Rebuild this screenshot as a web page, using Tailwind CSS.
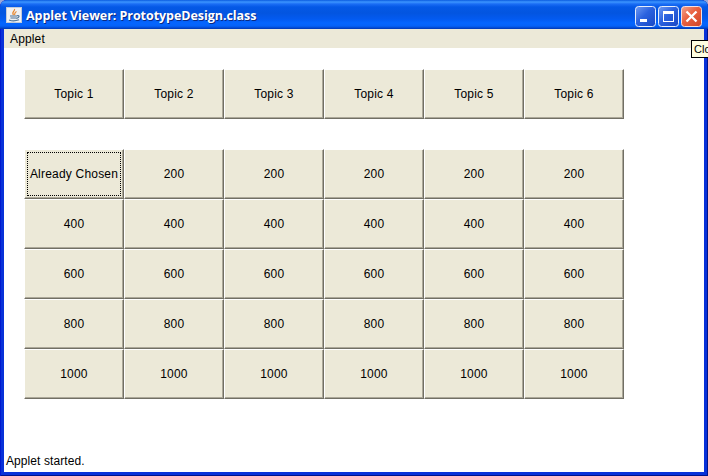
<!DOCTYPE html>
<html lang="en">
<head>
<meta charset="utf-8">
<title>Applet Viewer</title>
<script src="https://cdn.jsdelivr.net/npm/@tailwindcss/browser@4"></script>
</head>
<body class="w-[708px] h-[476px] overflow-hidden bg-[#9aa8d8] font-['Liberation_Sans',Arial,sans-serif] text-[12px] text-black">
<div class="relative flex flex-col w-[708px] h-[476px] rounded-t-[7px] overflow-hidden bg-[#0831d9] shadow-[inset_1px_0_#0019cf,inset_-1px_0_#00138c,inset_0_-1px_#00138c]">
  <header class="flex items-center h-[29px] shrink-0 pl-[6px] pr-[6px] bg-[linear-gradient(to_bottom,#0a5be0_0px,#3c95ff_2px,#1a6df5_4px,#0458e6_7px,#0355e0_13px,#035af0_19px,#0566ff_23px,#0562f8_26px,#0347ce_28px,#0037b0_29px)]">
    <svg class="w-4 h-4 mt-px shrink-0" viewBox="0 0 16 16" fill="none">
      <rect x="0.5" y="0.5" width="15" height="15" fill="#f0f1f3" stroke="#c3cbd8"/>
      <path d="M8.500 2C9.500 4 5 5 7.500 8M10.500 4.500C8 5.800 9.200 6.500 8.500 8" stroke="#e8862c" stroke-width="1.200"/>
      <path d="M4 9h7M4.500 11h6M11 8.800c3-1 2.500 2-.5 2.500M3 13c3 1.200 7 1 10-.2" stroke="#4f7396" stroke-width="1.200"/>
    </svg>
    <h1 class="ml-[4px] mt-[3px] whitespace-nowrap font-['Open_Sans',sans-serif] text-[12.5px] leading-[16px] font-bold text-white tracking-[-0.05px] [text-shadow:1px_1px_#0b2a82]">Applet Viewer: PrototypeDesign.class</h1>
    <div class="ml-auto flex gap-[2px] mt-[3px]">
      <svg class="w-[21px] h-[21px]" viewBox="0 0 21 21"><defs><linearGradient id="b" x2="1" y2="1"><stop stop-color="#6f9bf3"/><stop offset=".45" stop-color="#2b62df"/><stop offset="1" stop-color="#1947c4"/></linearGradient></defs><rect x=".5" y=".5" width="20" height="20" rx="3" fill="url(#b)" stroke="#e5edfc"/><path d="M5 13h7v3H5z" fill="#fff"/></svg>
      <svg class="w-[21px] h-[21px]" viewBox="0 0 21 21"><rect x=".5" y=".5" width="20" height="20" rx="3" fill="url(#b)" stroke="#e5edfc"/><path d="M5 5h11v11H5zM6 8v7h9V8z" fill="#fff" fill-rule="evenodd"/></svg>
      <svg class="w-[21px] h-[21px]" viewBox="0 0 21 21"><defs><linearGradient id="r" x2="1" y2="1"><stop stop-color="#f2a48f"/><stop offset=".45" stop-color="#e9603f"/><stop offset="1" stop-color="#d04526"/></linearGradient></defs><rect x=".5" y=".5" width="20" height="20" rx="3" fill="url(#r)" stroke="#f5dfe0"/><path d="M5.500 5.500l10 10M15.500 5.500l-10 10" stroke="#fff" stroke-width="2.300"/></svg>
    </div>
  </header>
  <div class="flex flex-col flex-1 mx-[4px] mb-[4px] bg-white">
    <nav class="h-[19px] bg-[#ece9d8] pl-[6px] leading-[20px] tracking-[0.15px]">Applet</nav>
    <main class="flex-1 pl-[20px] pt-[21px]">
      <div id="topics" class="grid grid-cols-[repeat(6,100px)] auto-rows-[50px] w-[600px]"></div>
      <div id="scores" class="grid grid-cols-[repeat(6,100px)] auto-rows-[50px] w-[600px] mt-[30px]"></div>
    </main>
    <footer class="h-[19px] pl-[2px] leading-[16px] tracking-[0.08px]">Applet started.</footer>
  </div>
</div>
<div class="absolute left-[691px] top-[40px] w-[40px] h-[18px] border border-black bg-[#ffffe1] pl-[2px] text-[11px] leading-[17px]">Close</div>
<script>
  const face = 'relative flex items-center justify-center bg-[#ece9d8] border-l border-t border-l-white border-t-white border-r border-b border-r-[#716f64] border-b-[#716f64] shadow-[inset_-1px_-1px_#aca899] whitespace-nowrap tracking-[0.2px] pb-px';
  function add(parent, label, focused) {
    const b = document.createElement('button');
    b.className = face;
    b.textContent = label;
    if (focused) {
      const f = document.createElement('span');
      f.className = 'absolute left-[2px] top-[2px] w-[94px] h-[44px] border border-dotted border-black';
      b.append(f);
    }
    document.getElementById(parent).append(b);
  }
  for (let i = 1; i <= 6; i++) add('topics', 'Topic ' + i);
  for (const v of [200, 400, 600, 800, 1000])
    for (let c = 0; c < 6; c++) {
      const chosen = v === 200 && c === 0;
      add('scores', chosen ? 'Already Chosen' : v, chosen);
    }
</script>
</body>
</html>
